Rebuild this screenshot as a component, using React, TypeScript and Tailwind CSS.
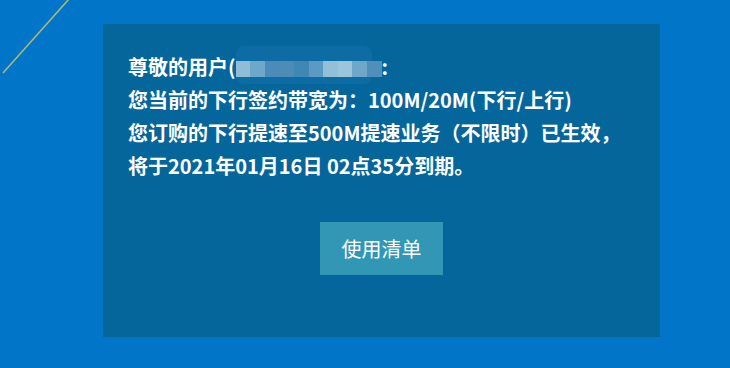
import React from "react";

const blurCells = [
  "#8fbcd6",
  "#6ea8c9",
  "#4a8cb8",
  "#4c8db6",
  "#4088b4",
  "#5a9bc3",
  "#93c0d9",
  "#9cc5dc",
  "#70a7c9",
  "#4f8fb9",
];

function MaskedName() {
  return (
    <span className="relative inline-block w-[146px] h-[18px] align-middle">
      <span className="absolute left-0 top-[-15px] w-[136px] h-[38px] rounded-[8px] bg-[#0d6ca3]" />
      <span className="absolute left-0 top-0 flex h-[16px]">
        {blurCells.map((c, i) => (
          <span key={i} className="w-[14.6px] h-full" style={{ backgroundColor: c }} />
        ))}
      </span>
    </span>
  );
}

export default function App() {
  return (
    <div className="relative w-[730px] h-[368px] overflow-hidden bg-[#0176c9] pt-[24px] pl-[103px]">
      <svg className="absolute left-0 top-0" width="80" height="80" viewBox="0 0 80 80">
        <line x1="69" y1="-1" x2="3" y2="73" stroke="#a9b77a" strokeWidth="1.6" />
      </svg>
      <div className="w-[557px] h-[313px] bg-[#05669c] pt-[26px] px-[25px] font-['Microsoft_YaHei','Noto_Sans_CJK_SC',sans-serif] text-white">
        <div className="text-[20px] leading-[33px] font-bold whitespace-nowrap">
          <p>
            尊敬的用户(
            <MaskedName />
            :
          </p>
          <p>您当前的下行签约带宽为：100M/20M(下行/上行)</p>
          <p>您订购的下行提速至500M提速业务（不限时）已生效，</p>
          <p>将于2021年01月16日 02点35分到期。</p>
        </div>
        <div className="flex justify-center mt-[40px]">
          <button className="w-[123px] h-[53px] bg-[#3297b4] text-[20px] text-white">使用清单</button>
        </div>
      </div>
    </div>
  );
}
